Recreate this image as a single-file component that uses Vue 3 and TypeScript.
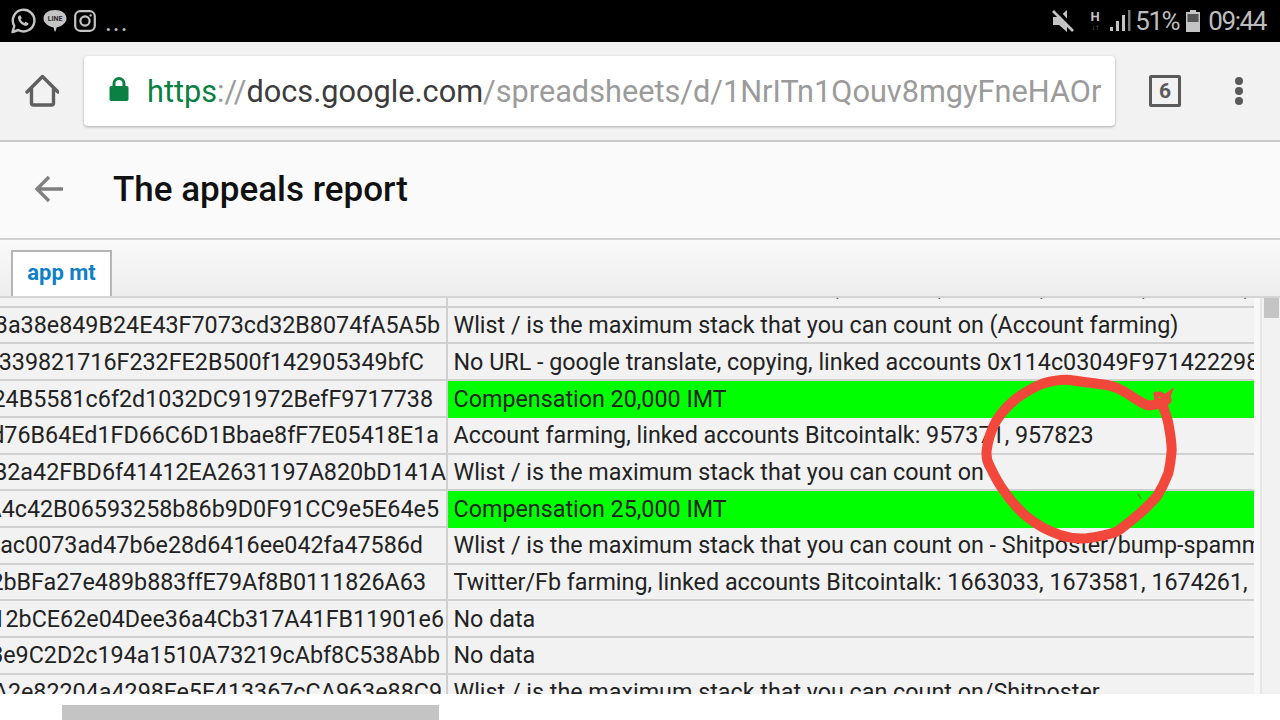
<script setup lang="ts">
interface Row { addr: string; pad: number; text: string; green?: boolean; top?: boolean }
const rows: Row[] = [
  { addr: '', pad: 7, text: ', , , , ,', top: true },
  { addr: 'B3a38e849B24E43F7073cd32B8074fA5A5b', pad: 6, text: 'Wlist / is the maximum stack that you can count on (Account farming)' },
  { addr: '5339821716F232FE2B500f142905349bfC', pad: 22, text: 'No URL - google translate, copying, linked accounts 0x114c03049F9714222985' },
  { addr: '224B5581c6f2d1032DC91972BefF9717738', pad: 13, text: 'Compensation 20,000 IMT', green: true },
  { addr: 'Ed76B64Ed1FD66C6D1Bbae8fF7E05418E1a', pad: 7, text: 'Account farming, linked accounts Bitcointalk: 957371, 957823' },
  { addr: 'B2a42FBD6f41412EA2631197A820bD141A', pad: 0, text: 'Wlist / is the maximum stack that you can count on' },
  { addr: 'A4c42B06593258b86b9D0F91CC9e5E64e5', pad: 7, text: 'Compensation 25,000 IMT', green: true },
  { addr: '0ac0073ad47b6e28d6416ee042fa47586d', pad: 23, text: 'Wlist / is the maximum stack that you can count on - Shitposter/bump-spammer' },
  { addr: '52bBFa27e489b883ffE79Af8B0111826A63', pad: 20, text: 'Twitter/Fb farming, linked accounts Bitcointalk: 1663033, 1673581, 1674261, 1680' },
  { addr: 'd12bCE62e04Dee36a4Cb317A41FB11901e6', pad: 2, text: 'No data' },
  { addr: '3e9C2D2c194a1510A73219cAbf8C538Abb', pad: 6, text: 'No data' },
  { addr: 'A2e82204a4298Fe5F413367cCA963e88C9', pad: 4, text: 'Wlist / is the maximum stack that you can count on/Shitposter' },
]
</script>

<template>
  <div class="page">
    <header class="status">
      <div class="status-left">
        <svg class="ic" width="26" height="26" viewBox="0 0 26 26"><path d="M2.500 24l1.800-6A10.800 10.800 0 1 1 8.400 22z" fill="none" stroke="#c4c4c4" stroke-width="2.400" stroke-linejoin="round"/><path d="M9.300 7.600c-.9.500-1.500 1.700-1.200 3.100.8 3.200 3.600 6.200 6.900 7 1.500.3 2.700-.3 3.200-1.300l.2-1.200-2.900-1.500-1.200 1.300c-1.600-.6-3-2-3.700-3.700l1.200-1.100-1.300-2.900z" fill="#c4c4c4"/></svg>
        <svg class="ic" width="24" height="26" viewBox="0 0 24 26"><path d="M12 2C18.300 2 23.500 5.400 23.500 10.500 23.500 15 18.500 18.500 13.500 19.500 13.400 21 13 22.600 12 24 11.200 22.600 10.800 21 10.600 19.500 5.500 18.500.5 15 .5 10.500.5 5.400 5.700 2 12 2z" fill="#c4c4c4"/><text x="12" y="13.200" class="line-txt">LINE</text></svg>
        <svg class="ic" width="22" height="22" viewBox="0 0 22 22"><rect x="1.200" y="1.200" width="19.600" height="19.600" rx="5" fill="none" stroke="#c4c4c4" stroke-width="2.200"/><circle cx="11" cy="11" r="4.600" fill="none" stroke="#c4c4c4" stroke-width="2.200"/><circle cx="16.600" cy="5.400" r="1.200" fill="#c4c4c4"/></svg>
        <span class="dots">...</span>
      </div>
      <div class="status-right">
        <svg class="mute" width="24" height="24" viewBox="0 0 24 24"><path d="M2 8h6l8-7v22l-8-7H2z" fill="#c4c4c4"/><path d="M4 0l19 21" stroke="#000" stroke-width="5"/><path d="M2 2l20 20" stroke="#c4c4c4" stroke-width="2.600"/></svg>
        <span class="h-badge">H<i>↓↑</i></span>
        <svg class="signal" width="21" height="22" viewBox="0 0 21 22"><rect x="0" y="17" width="3" height="4" fill="#c4c4c4"/><rect x="6" y="11" width="3" height="10" fill="#c4c4c4"/><rect x="12" y="5" width="3" height="16" fill="#c4c4c4"/><rect x="18" y="0" width="2.500" height="21" fill="#777"/></svg>
        <span class="pct">51%</span>
        <svg class="batt" width="14" height="22" viewBox="0 0 14 22"><path d="M4 0h6v2h4v20H0V2h4z" fill="#c4c4c4"/><rect x="1.500" y="4" width="11" height="8" fill="#555"/></svg>
        <span class="clock">09:44</span>
      </div>
    </header>

    <nav class="toolbar">
      <svg class="home" width="34" height="34" viewBox="0 0 34 34"><path d="M2 18L17.500 2.500 33 18M6.500 15v14a2 2 0 0 0 2 2h18a2 2 0 0 0 2-2V15" fill="none" stroke="#5f5f5f" stroke-width="3.400" stroke-linejoin="round" stroke-linecap="round"/></svg>
      <div class="omnibox">
        <svg class="lock" width="20" height="26" viewBox="0 0 20 26"><path d="M5 10V6.500a5 5 0 0 1 10 0V10" fill="none" stroke="#0b8043" stroke-width="3"/><rect x="0.500" y="9" width="19" height="15" rx="1.800" fill="#0b8043"/></svg>
        <span class="url"><span class="g">https</span><span class="s">://</span><span class="d">docs.google.com</span><span class="s">/spreadsheets/d/1NrITn1Qouv8mgyFneHAOr</span></span>
      </div>
      <div class="tabs-count">6</div>
      <div class="menu"><i></i><i></i><i></i></div>
    </nav>

    <section class="title-bar">
      <svg class="back" width="32" height="32" viewBox="0 0 32 32"><path d="M30 16H4M16 4L4 16l12 12" fill="none" stroke="#808080" stroke-width="3.400"/></svg>
      <h1>The appeals report</h1>
    </section>

    <section class="tab-strip">
      <div class="tab">app mt</div>
    </section>

    <section class="sheet">
      <div class="rows">
        <div v-for="(r, i) in rows" :key="i" class="row">
          <div class="c-addr" :style="{ paddingRight: r.pad + 'px' }">{{ r.addr }}</div>
          <div class="c-text" :class="{ green: r.green, marks: r.top }">{{ r.text }}</div>
        </div>
      </div>
      <div class="gutter"></div>
      <div class="vscroll"><div class="vthumb"></div></div>
      <svg class="scribble" width="210" height="190" viewBox="0 0 210 190">
        <path d="M186.700 30C180 34 173 36 166.700 35 160 32 153 27 146.700 23.300 140 19 133 16 126.700 15 115 13 102 12 90 10 80 9 72 11 63.300 13.300 54 17 45 22 36.700 28.300 28 35 22 42 16.700 50 11 60 8 70 6.700 80 6 87 7 92 10 96.700 14 105 18 113 23.300 120 30 130 38 139 46.700 146.700 57 155 68 161 80 165 89 168 98 169 106.700 168.300 117 167 127 165 136.700 161.700 145 156 152 150 160 143.300 166 138 171 133 176.700 126.700 181 120 185 112 188.300 103.300 190 96 191 88 191.700 80 191.500 71 190 62 188.300 53.300 187 46 184 39 181.700 33.300" fill="none" stroke="#f2483c" stroke-width="10" stroke-linecap="round" stroke-linejoin="round"/>
        <path d="M176 24l1 10M180 24l5 3 4-3-3 9" fill="none" stroke="#f2483c" stroke-width="5" stroke-linecap="round"/>
        <path d="M158 124l3 5" fill="none" stroke="#4f9a2c" stroke-width="1.500"/>
      </svg>
    </section>

    <footer class="bottom"><div class="hthumb"></div></footer>
  </div>
</template>

<style>
html, body { margin: 0; padding: 0; background: #fff; }
</style>

<style scoped>
.page {
  width: 1280px;
  height: 720px;
  overflow: hidden;
  display: flex;
  flex-direction: column;
  font-family: Roboto, "Liberation Sans", sans-serif;
  background: #fff;
}
.status {
  height: 42px;
  flex: none;
  background: #000;
  display: flex;
  justify-content: space-between;
  align-items: center;
  padding: 0 14px 0 10px;
  color: #c4c4c4;
}
.status-left, .status-right { display: flex; align-items: center; }
.status-left { gap: 7px; }
.line-txt { font: 700 7px Roboto, sans-serif; fill: #2b2b2b; text-anchor: middle; }
.dots { font-size: 26px; line-height: 26px; margin-left: 2px; margin-top: 2px; letter-spacing: 1px; }
.mute { margin-right: 13px; }
.h-badge { font-size: 13px; font-weight: 700; display: flex; flex-direction: column; align-items: center; line-height: 11px; width: 14px; margin-top: 2px; margin-right: 8px; }
.h-badge i { font-style: normal; font-size: 8px; color: #666; }
.signal { margin-right: 4px; }
.batt { margin: 0 8px 0 7px; }
.pct, .clock { font-size: 26px; letter-spacing: -1.400px; color: #bdbdbd; }
.toolbar {
  height: 98px;
  flex: none;
  background: #f2f2f2;
  border-bottom: 2px solid #c9c9c9;
  display: flex;
  align-items: center;
}
.home { margin-left: 25px; margin-right: 25px; }
.omnibox {
  width: 1031px;
  height: 70px;
  background: #fff;
  border-radius: 4px;
  box-shadow: 0 1px 3px rgba(0,0,0,.3);
  display: flex;
  align-items: center;
  overflow: hidden;
}
.lock { margin: -3px 18px 0 25px; flex: none; }
.url { font-size: 30.700px; white-space: nowrap; }
.g { color: #0b8043; }
.s { color: #9b9b9b; }
.d { color: #3c3c3c; }
.tabs-count {
  margin-left: 34px;
  width: 26px;
  height: 26px;
  border: 3px solid #5a5a5a;
  border-radius: 2px;
  display: flex;
  align-items: center;
  justify-content: center;
  font-size: 21px;
  font-weight: 700;
  color: #5a5a5a;
}
.menu { margin-left: 54px; display: flex; flex-direction: column; gap: 2px; }
.menu i { width: 8px; height: 8px; border-radius: 50%; background: #5a5a5a; display: block; }
.title-bar {
  flex: none;
  box-sizing: border-box;
  padding-bottom: 2px;
  background: #fafafa;
  border-bottom: 2px solid #d2d2d2;
  height: 98px;
  display: flex;
  align-items: center;
}
.back { margin-left: 33px; margin-right: 48px; }
h1 { margin: 0; font-size: 35px; font-weight: 500; color: #111; }
.tab-strip {
  height: 58px;
  flex: none;
  box-sizing: border-box;
  background: linear-gradient(#fafafa, #ededed);
  border-bottom: 2px solid #d4d4d4;
  display: flex;
  align-items: flex-end;
  padding-left: 11px;
}
.tab {
  box-sizing: border-box;
  width: 101px;
  height: 46px;
  padding-bottom: 4px;
  background: #fff;
  border: 2px solid #b5b5b5;
  border-bottom: 0;
  display: flex;
  align-items: center;
  justify-content: center;
  font-size: 22px;
  font-weight: 700;
  color: #0f7fc8;
}
.sheet {
  height: 396px;
  flex: none;
  position: relative;
  overflow: hidden;
  display: flex;
  background: #f2f2f2;
}
.rows { width: 1254px; margin-top: -26.900px; flex: none; }
.row { height: 36.700px; display: flex; font-size: 23.300px; color: #222; }
.c-addr {
  width: 448px;
  flex: none;
  box-sizing: border-box;
  border-right: 2px solid #d0d0d0;
  border-bottom: 2px solid #d0d0d0;
  overflow: hidden;
  white-space: nowrap;
  display: flex;
  justify-content: flex-end;
  align-items: center;
}
.c-text {
  flex: 1;
  min-width: 0;
  overflow: hidden;
  white-space: nowrap;
  padding-left: 5.500px;
  border-bottom: 2px solid #d0d0d0;
  display: flex;
  align-items: center;
}
.green { background: #00ff00; border-bottom-color: transparent; }
.marks { display: block; line-height: 34.800px; padding-left: 388px; word-spacing: 91.600px; }
.gutter { width: 6px; flex: none; background: #f8f8f8; border-right: 2px solid #e6e6e6; }
.vscroll { flex: 1; padding: 0 1px 0 2px; }
.vthumb { width: 15px; height: 20px; background: #c4c4c4; }
.scribble { position: absolute; left: 980px; top: 72px; }
.bottom { flex: 1; background: #fff; display: flex; align-items: flex-end; padding-left: 62px; }
.hthumb { width: 377px; height: 15px; background: #c4c4c4; }
</style>
